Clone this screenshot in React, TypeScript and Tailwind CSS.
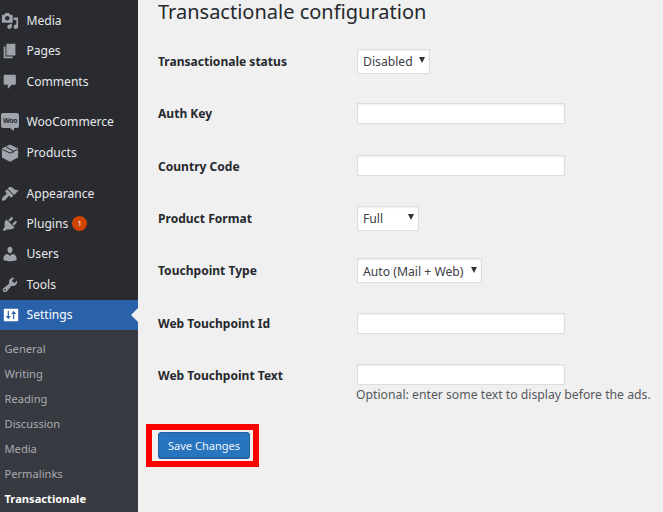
import type { ReactNode } from "react";

type Item = { label: string; icon: ReactNode; badge?: string; active?: boolean };

const Icon = ({ d }: { d: string }) => (
  <svg viewBox="0 0 20 20" className="h-[18px] w-[18px] fill-current">
    <path fillRule="evenodd" d={d} />
  </svg>
);

const MediaIcon = <Icon d="M13 11V4c0-.55-.45-1-1-1h-1.67L9 1H5L3.67 3H2c-.55 0-1 .45-1 1v7c0 .55.45 1 1 1h10c.55 0 1-.45 1-1zM7 4.5c1.38 0 2.5 1.12 2.5 2.5S8.38 9.5 7 9.5 4.5 8.38 4.5 7 5.62 4.5 7 4.5zM14 6h5v10.5c0 1.38-1.12 2.5-2.5 2.5S14 17.88 14 16.5s1.12-2.5 2.5-2.5c.17 0 .34.02.5.05V9h-3V6zm-4 8.05V13h2v3.5c0 1.38-1.12 2.5-2.5 2.5S7 17.88 7 16.5 8.12 14 9.5 14c.17 0 .34.02.5.05z" />;
const PagesIcon = <Icon d="M6 15V2h10v13H6zm-1 1h8v2H3V5h2v11z" />;
const CommentsIcon = <Icon d="M4 2h11.500c.55 0 1 .45 1 1v9c0 .55-.45 1-1 1H12l-4.500 4.800V13H4c-.55 0-1-.45-1-1V3c0-.55.45-1 1-1z" />;
const ProductsIcon = (
  <svg viewBox="0 0 20 20" className="h-[18px] w-[18px] fill-current">
    <path d="M10 .5 19 5v10l-9 4.700L1 15V5z" />
    <path d="M1.500 6 10 10.200 18.500 6M5.500 3.300l8 4.200v2.200" fill="none" stroke="#292b31" strokeWidth="1.100" />
  </svg>
);
const AppearanceIcon = <Icon d="M14.48 11.06L7.41 3.99l1.500-1.500c.5-.56 2.300-.47 3.510.32 1.210.8 1.430 1.280 2.910 2.100 1.180.64 2.450 1.260 4.450.85zm-.71.71L6.700 4.700 4.930 6.470c-.39.39-.39 1.020 0 1.410l1.060 1.060c.39.39.39 1.030 0 1.420-.6.6-1.430 1.110-2.210 1.690-.35.26-.7.53-1.010.84C1.430 14.230.4 16.080 1.400 17.070c.99 1 2.840-.03 4.180-1.360.31-.31.58-.66.85-1.020.57-.78 1.080-1.610 1.690-2.210.39-.39 1.020-.39 1.410 0l1.060 1.060c.39.39 1.020.39 1.410 0z" />;
const PluginsIcon = <Icon d="M13.110 4.360L9.870 7.600 8 5.730l3.240-3.240c.35-.34 1.050-.2 1.560.32.52.51.66 1.210.31 1.550zm-8 1.770l.91-1.120 9.010 9.010-1.190.84c-.71.71-2.630 1.160-3.820 1.160H6.140L4.900 17.260c-.59.59-1.540.59-2.120 0-.59-.58-.59-1.530 0-2.120l1.240-1.240v-3.880c0-1.130.4-3.190 1.090-3.890zm7.260 3.970l3.240-3.240c.34-.35 1.040-.21 1.550.31.52.51.66 1.210.31 1.550l-3.240 3.250z" />;
const UsersIcon = <Icon d="M10 9.250c-2.270 0-2.730-3.440-2.730-3.440C7 4.020 7.820 2 9.970 2c2.160 0 2.980 2.020 2.710 3.810 0 0-.41 3.440-2.680 3.440zm0 2.570L12.720 10c2.390 0 4.520 2.330 4.520 4.530v2.490s-3.650 1.130-7.240 1.130c-3.650 0-7.240-1.130-7.240-1.130v-2.490c0-2.250 1.940-4.480 4.470-4.480z" />;
const ToolsIcon = <Icon d="M16.680 9.770c-1.340 1.340-3.300 1.670-4.950.99l-5.410 6.520c-.99.99-2.590.99-3.580 0s-.99-2.590 0-3.570l6.520-5.420c-.68-1.650-.35-3.610.99-4.950 1.280-1.280 3.120-1.620 4.720-1.060l-2.890 2.890 2.820 2.820 2.860-2.870c.53 1.580.18 3.390-1.080 4.650zM3.810 16.210c.4.39 1.040.39 1.430 0 .4-.4.4-1.040 0-1.430-.39-.4-1.030-.4-1.430 0-.39.39-.39 1.030 0 1.430z" />;
const SettingsIcon = (
  <svg viewBox="0 0 20 20" className="h-[18px] w-[18px]">
    <rect x="2" y="3" width="16" height="14" rx="1" fill="#fff" />
    <path d="M7 5.300v7M13 14.700v-7" stroke="#2962ab" strokeWidth="1.300" />
    <path d="M4.300 11h5.400L7 14.700zM10.300 9h5.400L13 5.300z" fill="#2962ab" />
  </svg>
);
const WooIcon = (
  <span className="flex h-[18px] w-[18px] flex-col items-center">
    <span className="flex h-[15px] w-[18px] items-center justify-center rounded-[2px] bg-current">
      <span className="text-[7px] leading-none font-bold tracking-[-0.5px] text-[#292b31]">Woo</span>
    </span>
    <svg viewBox="0 0 4 3" className="ml-[3px] h-[3px] w-[4px] fill-current">
      <path d="M0 0h4v3z" />
    </svg>
  </span>
);

const groups: Item[][] = [
  [
    { label: "Media", icon: MediaIcon },
    { label: "Pages", icon: PagesIcon },
    { label: "Comments", icon: CommentsIcon },
  ],
  [
    { label: "WooCommerce", icon: WooIcon },
    { label: "Products", icon: ProductsIcon },
  ],
  [
    { label: "Appearance", icon: AppearanceIcon },
    { label: "Plugins", icon: PluginsIcon, badge: "1" },
    { label: "Users", icon: UsersIcon },
    { label: "Tools", icon: ToolsIcon },
    { label: "Settings", icon: SettingsIcon, active: true },
  ],
];

const submenu = ["General", "Writing", "Reading", "Discussion", "Media", "Permalinks", "Transactionale"];

function MenuItem({ label, icon, badge, active }: Item) {
  return (
    <li className={active ? "relative flex h-[30.4px] items-center bg-[#2962ab] text-white" : "flex h-[30.4px] items-center text-[#e8e9ea]"}>
      <span className={active ? "ml-[2px] w-[24.500px]" : "ml-[1px] w-[25.500px] text-[#a0a3a9]"}>{icon}</span>
      <span className="text-[12.1px]">{label}</span>
      {badge && (
        <span className="mb-[1px] ml-[4px] flex h-[15px] w-[15px] items-center justify-center rounded-full bg-[#d04300] text-[7.500px] text-white">{badge}</span>
      )}
      {active && (
        <svg viewBox="0 0 7 14" className="absolute top-[8px] right-0 h-[14px] w-[7px]">
          <path d="M7 0v14L0 7z" fill="#f0f0f0" />
        </svg>
      )}
    </li>
  );
}

function TextInput() {
  return <input className="block h-[21px] w-[208px] border border-[#dddddd] bg-white shadow-[inset_0_1px_2px_rgba(0,0,0,0.07)] outline-none" />;
}

function Select({ value, width }: { value: string; width: string }) {
  return (
    <button className={`${width} flex h-[25px] items-center justify-between border border-[#dddddd] bg-white pr-[4px] pl-[5px] text-[12.2px] text-[#3c4046] shadow-[inset_0_1px_2px_rgba(0,0,0,0.07)]`}>
      <span className="pt-[2px]">{value}</span>
      <svg viewBox="0 0 6 6" className="mb-[2px] h-[6px] w-[6px]">
        <path d="M0 0h6L3 6z" fill="#30343a" />
      </svg>
    </button>
  );
}

function Row({ label, children }: { label: string; children: ReactNode }) {
  return (
    <div className="flex h-[52.4px] items-center">
      <label className="w-[199px] pt-[1.500px] text-[12.05px] font-bold text-[#26292e]">{label}</label>
      {children}
    </div>
  );
}

export default function App() {
  return (
    <div className="flex h-[512px] w-[663px] overflow-hidden bg-[#f0f0f0] font-['Noto_Sans',sans-serif] leading-none whitespace-nowrap">
      <aside className="flex w-[137.500px] shrink-0 flex-col bg-[#292b31]">
        <nav className="flex flex-col gap-[10.400px] pt-[5.700px]">
          {groups.map((group) => (
            <ul key={group[0].label}>
              {group.map((item) => (
                <MenuItem key={item.label} {...item} />
              ))}
            </ul>
          ))}
        </nav>
        <ul className="flex-1 bg-[#373a40] pt-[5.800px] pl-[4.500px] text-[11.150px] text-[#a9acb0]">
          {submenu.map((label) => (
            <li key={label} className={label === "Transactionale" ? "flex h-[25px] items-center font-bold text-white" : "flex h-[25px] items-center"}>
              {label}
            </li>
          ))}
        </ul>
      </aside>

      <main className="flex-1 pl-[20.500px]">
        <h1 className="h-[35px] text-[20px] leading-[24px] text-[#26292e]">Transactionale configuration</h1>
        <Row label="Transactionale status">
          <Select value="Disabled" width="w-[73px]" />
        </Row>
        <Row label="Auth Key">
          <TextInput />
        </Row>
        <Row label="Country Code">
          <TextInput />
        </Row>
        <Row label="Product Format">
          <Select value="Full" width="w-[62px]" />
        </Row>
        <Row label="Touchpoint Type">
          <Select value="Auto (Mail + Web)" width="w-[125px]" />
        </Row>
        <Row label="Web Touchpoint Id">
          <TextInput />
        </Row>
        <Row label="Web Touchpoint Text">
          <div className="flex h-full flex-col pt-[14.500px]">
            <TextInput />
            <p className="ml-[-1px] pt-[3px] text-[12.230px] leading-[13px] text-[#55585d]">Optional: enter some text to display before the ads.</p>
          </div>
        </Row>
        <div className="mt-[22px] ml-[-12px] flex h-[43px] w-[113px] items-center border-6 border-[#fe0000] pl-[6px]">
          <button className="h-[26px] w-[92px] rounded-[3px] border border-[#2360a0] bg-[#2874bf] text-[11.050px] text-[#eef4fa] shadow-[0_1px_0_#2360a0]">Save Changes</button>
        </div>
      </main>
    </div>
  );
}
